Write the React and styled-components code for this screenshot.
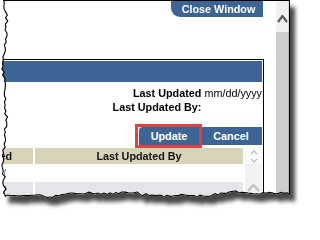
import React from 'react';
import styled, { createGlobalStyle } from 'styled-components';

const W = 290;
const H = 204;

function makeEdge() {
  let s = 987654;
  const rnd = () => {
    s = (s * 1103515245 + 12345) & 0x7fffffff;
    return s / 0x7fffffff;
  };
  const bottomY = (x) =>
    195 + 1.6 * Math.sin(x / 23) + 1.1 * Math.sin(x / 8 + 1) + (rnd() - 0.5) * 2.6;
  const leftX = (y) => 4.2 + 1.4 * Math.sin(y / 15) + (rnd() - 0.5) * 3.2;
  const pts = [];
  pts.push([leftX(0), 0]);
  pts.push([W, 0]);
  for (let x = W; x >= 4; x -= 3) pts.push([x, bottomY(x)]);
  for (let y = 192; y > 0; y -= 3) pts.push([leftX(y), y]);
  return pts;
}

const EDGE = makeEdge();
const CLIP = `polygon(${EDGE.map(([x, y]) => `${x.toFixed(1)}px ${y.toFixed(1)}px`).join(', ')})`;
const OUTLINE = EDGE.map(([x, y]) => `${x.toFixed(1)},${y.toFixed(1)}`).join(' ');

const BLUE = '#3c6595';
const FS = '10.8px';

const Global = createGlobalStyle`
  html, body { margin: 0; padding: 0; background: #fff; }
  body {
    width: 305px; height: 217px; overflow: hidden;
    font-family: "Liberation Sans", Arial, sans-serif;
    color: #000;
  }
`;

const Frame = styled.div`
  width: ${W}px;
  height: ${H}px;
  filter: drop-shadow(5px 7px 2px rgba(0, 0, 0, 0.72));
`;

const Screen = styled.div`
  position: relative;
  width: 100%;
  height: 100%;
  background: #fff;
  overflow: hidden;
  display: flex;
  clip-path: ${CLIP};
`;

const Outline = styled.svg`
  position: absolute;
  left: 0;
  top: 0;
  z-index: 5;
  pointer-events: none;
`;

const Main = styled.div`
  width: 276px;
  flex: none;
  display: flex;
  flex-direction: column;
`;

const Scrollbar = styled.div`
  flex: 1;
  display: flex;
  flex-direction: column;
  background: #cdcdcd;
`;

const ScrollUp = styled.div`
  height: 32px;
  box-sizing: border-box;
  background: #f0f0f0;
  display: flex;
  align-items: flex-end;
  justify-content: center;
  padding: 0 1px 9px 0;
`;

const TopBar = styled.div`
  display: flex;
  justify-content: flex-end;
  padding-right: 13px;
`;

const CloseTab = styled.div`
  width: 92px;
  height: 17px;
  box-sizing: border-box;
  padding-left: 3px;
  background: ${BLUE};
  color: #fff;
  font-weight: bold;
  font-size: ${FS};
  display: flex;
  align-items: center;
  justify-content: center;
  border-bottom-left-radius: 9px;
`;

const Panel = styled.div`
  flex: 1;
  margin: 42px 12px 0 -60px;
  border: 1px solid #000;
  border-bottom: none;
  padding: 1px 1px 0;
  display: flex;
  flex-direction: column;
`;

const PanelHeader = styled.div`
  height: 21px;
  background: ${BLUE};
`;

const InfoGrid = styled.div`
  display: grid;
  grid-template-columns: auto auto;
  justify-content: end;
  column-gap: 3px;
  padding-top: 4px;
  font-size: ${FS};
  line-height: 14px;
`;

const Label = styled.div`
  font-weight: bold;
  text-align: right;
`;

const Value = styled.div`
  text-align: left;
`;

const ButtonRow = styled.div`
  margin-top: 13px;
  display: flex;
  justify-content: flex-end;
  gap: 1px;
`;

const Button = styled.button`
  position: relative;
  width: ${(p) => p.$w}px;
  height: 18px;
  padding: 0;
  border: none;
  background: ${BLUE};
  color: #fff;
  font-family: inherit;
  font-weight: bold;
  font-size: ${FS};
  border-top-left-radius: ${(p) => (p.$round ? 4 : 0)}px;
`;

const Highlight = styled.span`
  position: absolute;
  top: -3px;
  bottom: -3px;
  left: -4px;
  right: -3px;
  border: 3px solid #e2413d;
  z-index: 2;
`;

const Table = styled.div`
  margin-top: 3px;
  display: grid;
  grid-template-columns: 91px 1fr 17px;
  grid-template-rows: 16px 16px 16px;
  column-gap: 2px;
  row-gap: 1px;
`;

const HeadCell = styled.div`
  background: #d6d3b8;
  font-weight: bold;
  font-size: ${FS};
  color: #151515;
  display: flex;
  align-items: center;
  justify-content: ${(p) => p.$justify};
  padding-right: ${(p) => p.$pr || 0}px;
  white-space: nowrap;
  overflow: hidden;
`;

const Cell = styled.div`
  background: ${(p) => p.$bg};
  font-size: ${FS};
  color: #6b4fa0;
  display: flex;
  align-items: center;
  justify-content: flex-end;
  padding-right: ${(p) => p.$pr || 0}px;
  white-space: nowrap;
  overflow: hidden;
`;

const ScrollCol = styled.div`
  grid-column: 3;
  grid-row: 1 / span 3;
  display: flex;
  flex-direction: column;
  background: #f2f2f2;
`;

const SortBox = styled.div`
  height: 16px;
  background: #f9f9f9;
  display: flex;
  flex-direction: column;
  align-items: center;
  justify-content: center;
  gap: 3px;
`;

const Track = styled.div`
  flex: 1;
  display: flex;
  justify-content: center;
  padding-top: 20px;
`;

const Chevron = ({ w, h, dir = 'up', color, sw }) => (
  <svg width={w} height={h} viewBox={`0 0 ${w} ${h}`}>
    <polyline
      points={
        dir === 'up'
          ? `1,${h - 1} ${w / 2},1 ${w - 1},${h - 1}`
          : `1,1 ${w / 2},${h - 1} ${w - 1},1`
      }
      fill="none"
      stroke={color}
      strokeWidth={sw}
    />
  </svg>
);

export default function App() {
  return (
    <>
      <Global />
      <Frame>
        <Screen>
          <Main>
            <TopBar>
              <CloseTab>Close Window</CloseTab>
            </TopBar>
            <Panel>
              <PanelHeader />
              <InfoGrid>
                <Label>Last Updated</Label>
                <Value>mm/dd/yyyy</Value>
                <Label>Last Updated By:</Label>
                <Value />
              </InfoGrid>
              <ButtonRow>
                <Button $w={60} $round>
                  Update
                  <Highlight />
                </Button>
                <Button $w={62}>Cancel</Button>
              </ButtonRow>
              <Table>
                <HeadCell $justify="flex-end" $pr={21}>Date Updated</HeadCell>
                <HeadCell $justify="center">Last Updated By</HeadCell>
                <ScrollCol>
                  <SortBox>
                    <Chevron w={8} h={5} dir="up" color="#bdbdbd" sw={1.3} />
                    <Chevron w={8} h={5} dir="down" color="#bdbdbd" sw={1.3} />
                  </SortBox>
                  <Track>
                    <Chevron w={13} h={8} dir="up" color="#c4c4c4" sw={2.4} />
                  </Track>
                </ScrollCol>
                <Cell $bg="#fff" $pr={27}>/</Cell>
                <Cell $bg="#fff" />
                <Cell $bg="#e6e3e9" $pr={27}>/</Cell>
                <Cell $bg="#e6e3e9" />
              </Table>
            </Panel>
          </Main>
          <Scrollbar>
            <ScrollUp>
              <Chevron w={11} h={8} dir="up" color="#5a5a5a" sw={2.2} />
            </ScrollUp>
          </Scrollbar>
          <Outline width={W} height={H} viewBox={`0 0 ${W} ${H}`}>
            <polygon points={OUTLINE} fill="none" stroke="#000" strokeWidth="2.2" />
          </Outline>
        </Screen>
      </Frame>
    </>
  );
}
